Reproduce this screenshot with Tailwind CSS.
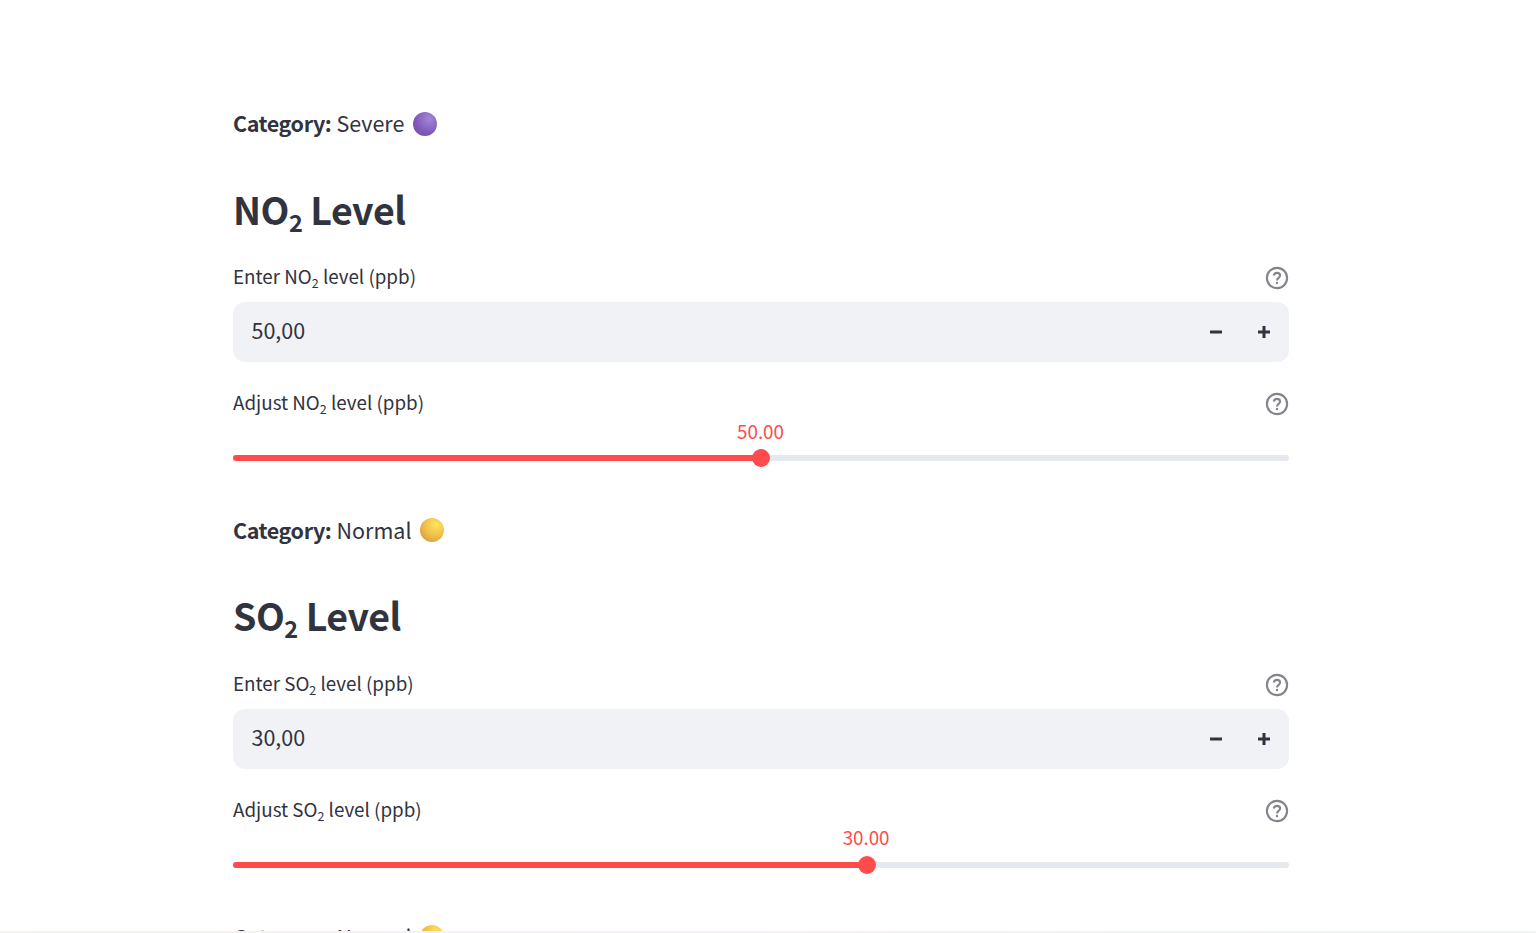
<!DOCTYPE html>
<html lang="en">
<head>
<meta charset="utf-8">
<title>Pollutant levels</title>
<script src="https://cdn.jsdelivr.net/npm/@tailwindcss/browser@4"></script>
</head>
<body class="relative h-[933px] overflow-hidden bg-white font-['Noto_Sans_CJK_SC',sans-serif] text-[#31333f]">
<svg class="hidden">
  <symbol id="help" viewBox="0 0 24 24"><g fill="none" stroke="#83848c" stroke-width="2.1"><circle cx="12" cy="12" r="10.1"/><path d="M8.7 9.5C9.2 7.6 10.4 6.9 12 6.9c1.8 0 3.1 1 3.1 2.6 0 2.3-3.1 2.4-3.1 4.9"/><path d="M12 15.9v2.2"/></g></symbol>
  <symbol id="minus" viewBox="0 0 12 12"><path d="M0 4.5h12v3H0z" fill="#31333f"/></symbol>
  <symbol id="plus" viewBox="0 0 12 12"><path d="M4.5 0h3v4.5H12v3H7.5V12h-3V7.5H0v-3h4.5z" fill="#31333f"/></symbol>
</svg>
<main class="ml-[233px] w-[1056px] pt-[105px]">
  <div class="flex h-9 items-center text-[21.5px] leading-9"><b class="w-[98px] font-bold whitespace-nowrap tracking-[-0.42px]">Category:</b><span class="ml-[5.5px]">Severe</span><span class="mt-px ml-[8.5px] h-6 w-6 rounded-full bg-[radial-gradient(circle_at_68%_28%,#a187d5,#8058bb_60%,#714aaa)]"></span></div>

  <section class="flow-root h-[407px]">
    <h2 class="mt-[40px] h-14 text-[37.5px] leading-14 font-bold tracking-[-0.5px]">NO<span class="align-[-7px] text-[23.5px] leading-none">2</span> Level</h2>
    <div class="mt-[21px] flex h-9 items-center justify-between text-[18.8px] leading-9"><span>Enter NO<span class="align-[-4px] text-[12.5px] leading-none">2</span> level (ppb)</span><svg class="mt-[3px] h-6 w-6"><use href="#help"/></svg></div>
    <div class="mt-[8px] flex h-[60px] items-center rounded-xl bg-[#f0f2f6] pr-[19px] pl-[18.5px] text-[21.5px]"><span class="-mt-[3px] flex-1">50,00</span><svg class="mr-9 h-3 w-3"><use href="#minus"/></svg><svg class="h-3 w-3"><use href="#plus"/></svg></div>
    <div class="mt-[22px] flex h-9 items-center justify-between text-[18.8px] leading-9"><span>Adjust NO<span class="align-[-4px] text-[12.5px] leading-none">2</span> level (ppb)</span><svg class="mt-[3px] h-6 w-6"><use href="#help"/></svg></div>
    <div class="relative mt-[35px] h-1.5 rounded-full bg-[#e5e8ee]">
      <div class="h-full rounded-l-full bg-[#ff4b4b]" style="width:50%"></div>
      <div class="absolute -top-1.5 h-[18px] w-[18px] -translate-x-1/2 rounded-full bg-[#ff4b4b]" style="left:50%"></div>
      <div class="absolute -top-[39px] -ml-[0.5px] -translate-x-1/2 text-[18.8px] leading-[30px] text-[#ff4b4b]" style="left:50%">50.00</div>
    </div>
    <div class="mt-[51px] flex h-9 items-center text-[21.5px] leading-9"><b class="w-[98px] font-bold whitespace-nowrap tracking-[-0.42px]">Category:</b><span class="ml-[5.5px]">Normal</span><span class="ml-[8.5px] h-6 w-6 rounded-full bg-[radial-gradient(circle_at_68%_28%,#ffe45e,#efbd48_50%,#d69a47_85%,#db805a)]"></span></div>
  </section>

  <section class="flow-root h-[407px]">
    <h2 class="mt-[39px] h-14 text-[37.5px] leading-14 font-bold tracking-[-0.5px]">SO<span class="align-[-7px] text-[23.5px] leading-none">2</span> Level</h2>
    <div class="mt-[22px] flex h-9 items-center justify-between text-[18.8px] leading-9"><span>Enter SO<span class="align-[-4px] text-[12.5px] leading-none">2</span> level (ppb)</span><svg class="mt-[3px] h-6 w-6"><use href="#help"/></svg></div>
    <div class="mt-[8px] flex h-[60px] items-center rounded-xl bg-[#f0f2f6] pr-[19px] pl-[18.5px] text-[21.5px]"><span class="-mt-[3px] flex-1">30,00</span><svg class="mr-9 h-3 w-3"><use href="#minus"/></svg><svg class="h-3 w-3"><use href="#plus"/></svg></div>
    <div class="mt-[22px] flex h-9 items-center justify-between text-[18.8px] leading-9"><span>Adjust SO<span class="align-[-4px] text-[12.5px] leading-none">2</span> level (ppb)</span><svg class="mt-[3px] h-6 w-6"><use href="#help"/></svg></div>
    <div class="relative mt-[35px] h-1.5 rounded-full bg-[#e5e8ee]">
      <div class="h-full rounded-l-full bg-[#ff4b4b]" style="width:60%"></div>
      <div class="absolute -top-1.5 h-[18px] w-[18px] -translate-x-1/2 rounded-full bg-[#ff4b4b]" style="left:60%"></div>
      <div class="absolute -top-[40px] -ml-[0.5px] -translate-x-1/2 text-[18.8px] leading-[30px] text-[#ff4b4b]" style="left:60%">30.00</div>
    </div>
    <div class="mt-[51px] flex h-9 items-center text-[21.5px] leading-9"><b class="w-[98px] font-bold whitespace-nowrap tracking-[-0.42px]">Category:</b><span class="ml-[5.5px]">Normal</span><span class="ml-[8.5px] h-6 w-6 rounded-full bg-[radial-gradient(circle_at_68%_28%,#ffe45e,#efbd48_50%,#d69a47_85%,#db805a)]"></span></div>
  </section>
</main>
<div class="absolute inset-x-0 bottom-0 h-0.5 bg-linear-to-r from-[#f8f1f0] via-[#f5f1f8] to-[#eef4f8]"></div>
</body>
</html>
